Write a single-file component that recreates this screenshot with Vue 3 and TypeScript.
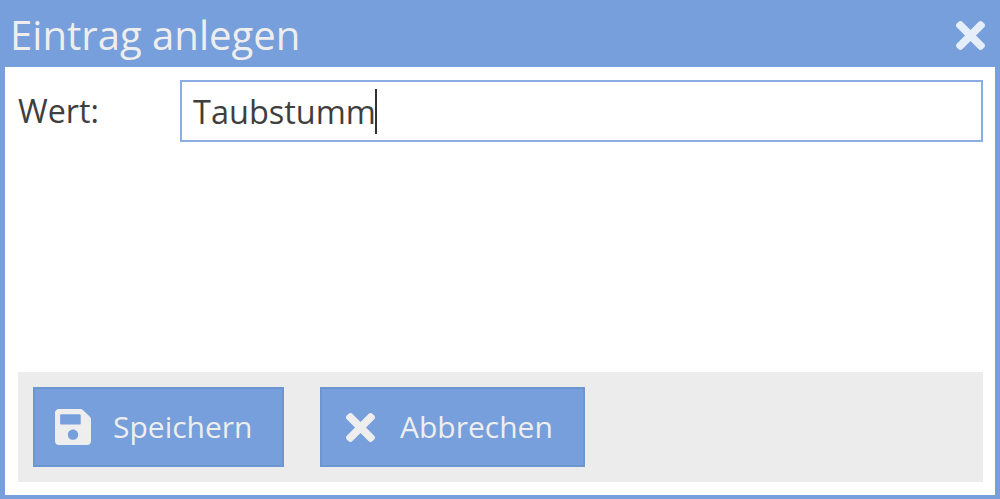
<script setup lang="ts">
const title = 'Eintrag anlegen'
const label = 'Wert:'
const value = 'Taubstumm'
</script>

<template>
  <div class="dialog">
    <header class="head">
      <h1 class="title">{{ title }}</h1>
      <svg class="x head-x" viewBox="0 80 352 352" aria-hidden="true">
        <path d="M242.72 256l100.07-100.07c12.28-12.28 12.28-32.19 0-44.48l-22.24-22.24c-12.28-12.28-32.19-12.28-44.48 0L176 189.28 75.93 89.21c-12.28-12.28-32.19-12.28-44.48 0L9.21 111.45c-12.28 12.28-12.28 32.19 0 44.48L109.28 256 9.21 356.07c-12.28 12.28-12.28 32.19 0 44.48l22.24 22.24c12.28 12.28 32.2 12.28 44.48 0L176 322.72l100.07 100.07c12.28 12.28 32.2 12.28 44.48 0l22.24-22.24c12.28-12.28 12.28-32.19 0-44.48L242.72 256z" />
      </svg>
    </header>
    <main class="body">
      <div class="row">
        <label class="label">{{ label }}</label>
        <div class="input"><span>{{ value }}</span><i class="caret"></i></div>
      </div>
      <footer class="actions">
        <button class="btn save" type="button">
          <svg class="save-icon" viewBox="0 32 448 448" aria-hidden="true">
            <path d="M433.941 129.941l-83.882-83.882A48 48 0 0 0 316.118 32H48C21.49 32 0 53.49 0 80v352c0 26.51 21.49 48 48 48h352c26.51 0 48-21.49 48-48V163.882a48 48 0 0 0-14.059-33.941zM224 416c-35.346 0-64-28.654-64-64 0-35.346 28.654-64 64-64s64 28.654 64 64c0 35.346-28.654 64-64 64zm96-304.52V212c0 6.627-5.373 12-12 12H76c-6.627 0-12-5.373-12-12V108c0-6.627 5.373-12 12-12h228.52c3.183 0 6.235 1.264 8.485 3.515l3.48 3.48A11.996 11.996 0 0 1 320 111.48z" />
          </svg>
          <span>Speichern</span>
        </button>
        <button class="btn cancel" type="button">
          <svg class="x" viewBox="0 80 352 352" aria-hidden="true">
            <path d="M242.72 256l100.07-100.07c12.28-12.28 12.28-32.19 0-44.48l-22.24-22.24c-12.28-12.28-32.19-12.28-44.48 0L176 189.28 75.93 89.21c-12.28-12.28-32.19-12.28-44.48 0L9.21 111.45c-12.28 12.28-12.28 32.19 0 44.48L109.28 256 9.21 356.07c-12.28 12.28-12.28 32.19 0 44.48l22.24 22.24c12.28 12.28 32.2 12.28 44.48 0L176 322.72l100.07 100.07c12.28 12.28 32.2 12.28 44.48 0l22.24-22.24c12.28-12.28 12.28-32.19 0-44.48L242.72 256z" />
          </svg>
          <span>Abbrechen</span>
        </button>
      </footer>
    </main>
  </div>
</template>

<style>
html, body { margin: 0; background: #fff; }
</style>

<style scoped>
.dialog {
  box-sizing: border-box;
  width: 1000px;
  height: 499px;
  display: flex;
  flex-direction: column;
  background: #769fdb;
  padding: 0 5px 4px;
  font-family: "Open Sans", sans-serif;
  color: #3f3f3f;
}
.head {
  height: 67px;
  flex: none;
  display: flex;
  align-items: center;
  justify-content: space-between;
  padding: 3px 10px 0 6px;
  box-sizing: border-box;
}
.title {
  margin: 0 0 0 -1px;
  font-size: 40.1px;
  font-weight: 400;
  line-height: 1;
  color: #eeeeee;
}
.x { width: 29px; height: 29px; fill: #eeeeee; display: block; flex: none; }
.head-x { fill: #e6eef9; margin-top: -3px; position: relative; top: 1.5px; }
.body {
  flex: 1;
  background: #fff;
  display: flex;
  flex-direction: column;
  justify-content: space-between;
  padding: 13px 12px 13px 13px;
}
.row { display: flex; }
.label {
  width: 162px;
  flex: none;
  font-size: 32.2px;
  line-height: 60px;
  margin-top: 1px;
}
.input {
  flex: 1;
  box-sizing: border-box;
  height: 62px;
  border: 2px solid #8aade3;
  padding: 2px 11px 0;
  display: flex;
  align-items: center;
  font-size: 32.5px;
  line-height: 58px;
}
.caret {
  width: 2px;
  height: 45px;
  background: #333;
  margin-left: -1px;
  margin-top: -2px;
}
.actions {
  height: 110px;
  box-sizing: border-box;
  background: #ececec;
  display: flex;
  align-items: center;
  gap: 36px;
  padding: 0 15px;
}
.btn {
  height: 80px;
  box-sizing: border-box;
  background: #769fdb;
  border: 2px solid #6c96cf;
  color: #eeeeee;
  font: inherit;
  font-size: 30px;
  line-height: 40px;
  display: flex;
  align-items: center;
  padding: 0;
}
.btn span { margin-top: -1px; }
.save { width: 251px; padding-left: 20px; gap: 22px; }
.cancel { width: 265px; padding-left: 23.5px; gap: 25.5px; }
.save-icon { width: 36px; height: 36px; fill: #eeeeee; display: block; flex: none; }
</style>
